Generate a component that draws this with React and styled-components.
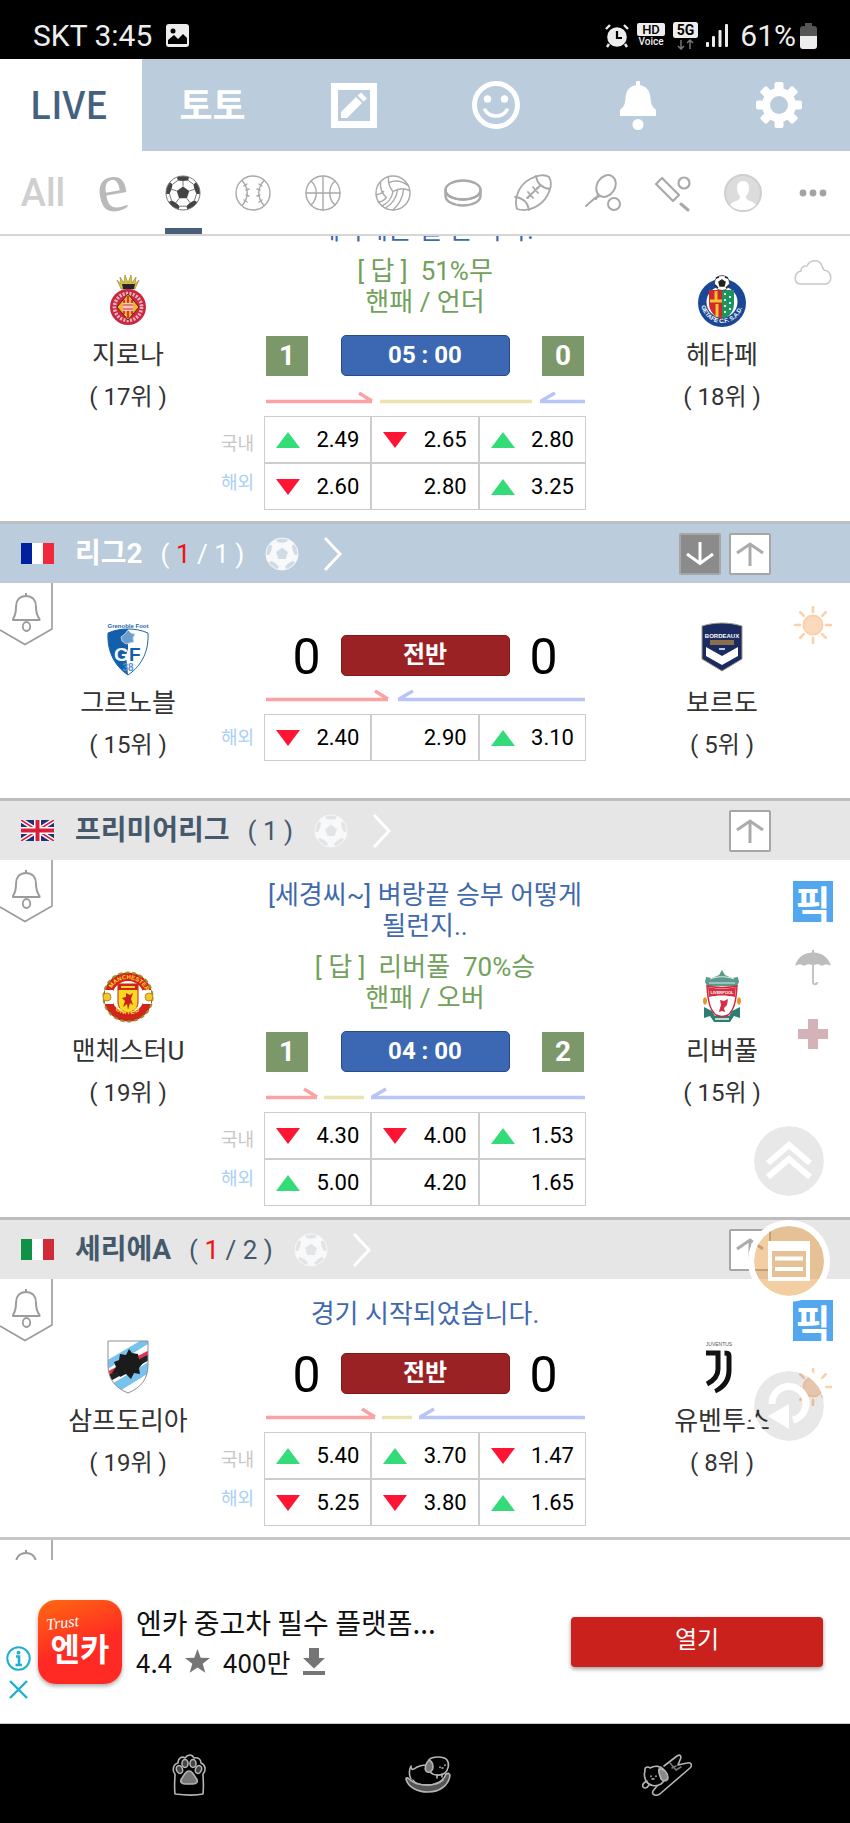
import React, { useState } from "react";
import styled, { createGlobalStyle } from "styled-components";

const GlobalStyle = createGlobalStyle`
  * {
    box-sizing: border-box;
  }

  body {
    margin: 0;
    background: #fff;
    font-family: Roboto, "Noto Sans CJK KR", sans-serif;
    color: #333;
  }

  button {
    padding: 0;
    border: none;
    background: none;
    font: inherit;
    color: inherit;
    cursor: pointer;
  }

  svg {
    display: block;
    flex-shrink: 0;
  }
`;

const Page = styled.div`
  display: flex;
  flex-direction: column;
  height: 100vh;
  overflow: hidden;
`;

/* ---------- status bar ---------- */

const StatusBar = styled.div`
  display: flex;
  align-items: center;
  justify-content: space-between;
  height: 59px;
  padding: 12px 33px 0;
  background: #000;
  color: #ededed;
  font-size: 30px;
  line-height: 36px;
`;

const StatusGroup = styled.div`
  display: flex;
  align-items: center;
  gap: ${(p) => p.$gap}px;
`;

const Battery = styled.div`
  display: flex;
  align-items: center;
  gap: 4px;
  margin-left: 4px;
`;

/* ---------- main tabs ---------- */

const MainTabs = styled.nav`
  display: flex;
  height: 92px;
  flex-shrink: 0;
  background: #bbccdc;
`;

const MainTab = styled.button`
  flex: 1;
  display: flex;
  align-items: center;
  justify-content: center;
  background: ${(p) => (p.$active ? "#fff" : "transparent")};
  color: ${(p) => (p.$active ? "#43627f" : "#fff")};
  font-family: "Noto Sans CJK KR", sans-serif;
  font-size: 36px;
  line-height: 40px;
  font-weight: 700;
`;

const TabWord = styled.span`
  padding-bottom: 4px;
`;

const LiveWord = styled(TabWord)`
  padding-right: 4px;
  font-size: 38px;
  font-weight: 500;
`;

/* ---------- sport tabs ---------- */

const SportTabs = styled.nav`
  display: flex;
  height: 85px;
  flex-shrink: 0;
  padding: 0 2px 0 8px;
  border-bottom: 2px solid #d6d6d6;
`;

const SportTab = styled.button`
  flex: 1;
  display: flex;
  flex-direction: column;
  align-items: center;
  color: #a9a9a9;

  &::after {
    content: "";
    width: 37px;
    height: 6px;
    background: ${(p) => (p.$active ? "#4a6078" : "transparent")};
  }
`;

const SportFace = styled.span`
  flex: 1;
  display: flex;
  align-items: center;
  padding-top: 7px;
`;

const AllLabel = styled.span`
  color: #cfcfcf;
  font-size: 38px;
  font-weight: 500;
  line-height: 40px;
`;

const ELabel = styled.span`
  padding-bottom: 12px;
  color: #b9b9b9;
  font-family: "Liberation Serif", serif;
  font-size: 72px;
  line-height: 40px;
  transform: rotate(-10deg);
`;

/* ---------- list ---------- */

const Board = styled.main`
  position: relative;
  flex: 1;
  min-height: 0;
  overflow: hidden;
`;

const Scrolled = styled.div`
  margin-top: -72px;
`;

const LeagueBar = styled.header`
  display: flex;
  align-items: center;
  height: 62px;
  padding: 0 79px 0 21px;
  border-top: 3px solid #bdbdbd;
  background: ${(p) => (p.$live ? "#bbccdc" : "#e6e6e6")};
  color: ${(p) => (p.$live ? "#fff" : "#44596c")};
`;

const LeagueLink = styled.a`
  flex: 1;
  display: flex;
  align-items: center;
  color: inherit;
  text-decoration: none;
`;

const LeagueName = styled.span`
  margin: 0 18px 0 21px;
  font-size: 28px;
  line-height: 36px;
  font-weight: 700;
`;

const LeagueCount = styled.span`
  margin-right: 21px;
  font-size: 26px;
  line-height: 36px;
`;

const LiveCount = styled.span`
  color: #f01010;
`;

const ChevronBox = styled.span`
  margin-left: 24px;
`;

const MoveButtons = styled.div`
  display: flex;
  gap: 8px;
`;

const MoveButton = styled.button`
  display: flex;
  align-items: center;
  justify-content: center;
  width: 42px;
  height: 42px;
  border: 2px solid #a6a6a6;
  border-radius: 2px;
  background: ${(p) => (p.$dark ? "#8b8b8b" : "#fff")};
  color: ${(p) => (p.$dark ? "#fff" : "#ababab")};
`;

const MatchRow = styled.article`
  position: relative;
  display: grid;
  grid-template-columns: 1fr 338px 1fr;
  min-height: 215px;
`;

const AlarmButton = styled.button`
  position: absolute;
  top: 0;
  left: 0;
`;

const Team = styled.div`
  display: flex;
  flex-direction: column;
  align-items: center;
  justify-content: center;
  padding-top: 4px;
`;

const TeamName = styled.div`
  margin-top: 9px;
  font-size: 26px;
  line-height: 36px;
`;

const TeamRank = styled.div`
  margin-top: 6px;
  font-size: 24px;
  line-height: 36px;
`;

const Center = styled.div`
  padding: 20px 8px 11px;
`;

const Talk = styled.div`
  min-height: 30px;
  padding-bottom: 11px;
  font-size: 26px;
  line-height: 31px;
  text-align: center;
  white-space: pre-line;
`;

const Question = styled.p`
  margin: 0 -8px 10px;
  color: #4069ad;
`;

const Answer = styled.p`
  margin: 0 0 6px;
  color: #71a15b;
  white-space: pre-wrap;
`;

const ScoreBar = styled.div`
  display: grid;
  grid-template-columns: 1fr 169px 1fr;
  align-items: center;
  height: 41px;
  padding: 0 2px;
`;

const Guess = styled.div`
  display: flex;
  align-items: center;
  justify-content: center;
  width: 42px;
  height: 40px;
  justify-self: ${(p) => p.$side};
  background: #7c9769;
  color: #fff;
  font-size: 28px;
  font-weight: 700;
`;

const Goals = styled.div`
  justify-self: ${(p) => p.$side};
  padding: 4px 20px 0;
  color: #000;
  font-size: 50px;
  line-height: 41px;
`;

const Pill = styled.div`
  height: 41px;
  border: 1px solid ${(p) => (p.$live ? "#84191c" : "#2a4a8c")};
  border-radius: 5px;
  background: ${(p) => (p.$live ? "#9a2224" : "#3b67b3")};
  color: #fff;
  font-size: 24px;
  font-weight: 700;
  line-height: 39px;
  text-align: center;
`;

const TrendRow = styled.div`
  margin: 14px 0 12px;
  padding: 0 2px;
`;

const OddsTable = styled.table`
  width: calc(100% + 43px);
  margin-left: -43px;
  table-layout: fixed;
  border-collapse: separate;
  border-spacing: 0;
`;

const SourceCell = styled.th`
  width: 43px;
  padding: 0 10px 0 0;
  color: ${(p) => (p.$foreign ? "#a9cff6" : "#c6c6c6")};
  font-size: 18px;
  font-weight: 400;
  line-height: 20px;
  text-align: left;
  white-space: nowrap;

  tr:first-child:not(:only-child) & {
    padding-top: 8px;
  }

  tr:last-child:not(:only-child) & {
    padding-bottom: 8px;
  }
`;

const OddsCell = styled.td`
  height: 47px;
  padding: 0 11px;
  border: 1px solid #cdcdcd;
  color: #000;
`;

const OddsValue = styled.div`
  display: flex;
  align-items: center;
  justify-content: space-between;
  font-size: 22px;
  line-height: 24px;
`;

const Triangle = styled.span`
  width: 0;
  height: 0;
  border-left: 12px solid transparent;
  border-right: 12px solid transparent;
  border-bottom: ${(p) => (p.$up ? "16px solid #33dc78" : "none")};
  border-top: ${(p) => (p.$up ? "none" : "16px solid #ff1433")};
`;

const Extras = styled.div`
  position: absolute;
  top: 21px;
  right: 16px;
  display: flex;
  flex-direction: column;
  gap: 25px;
`;

const Extra = styled.div`
  display: flex;
  align-items: center;
  justify-content: center;
  width: 42px;
  height: 41px;
`;

const PickButton = styled.button`
  width: 40px;
  height: 41px;
  background: #53a7ee;
  color: #fff;
  font-family: "Noto Sans CJK KR", sans-serif;
  font-size: 38px;
  font-weight: 700;
  line-height: 38px;
`;

const Floating = styled.div`
  position: absolute;
  right: 20px;
  bottom: 113px;
  display: flex;
  flex-direction: column;
  gap: 18px;
`;

const RoundButton = styled.button`
  display: flex;
  align-items: center;
  justify-content: center;
  width: 82px;
  height: 82px;
  border: 6px solid #fff;
  border-radius: 50%;
  background: ${(p) => (p.$warm ? "rgba(232, 150, 60, 0.47)" : "rgba(0, 0, 0, 0.09)")};
  background-clip: padding-box;

  &:last-child {
    margin-top: 45px;
  }
`;

/* ---------- ad ---------- */

const Ad = styled.aside`
  display: flex;
  align-items: center;
  height: 164px;
  flex-shrink: 0;
  padding: 0 27px 0 6px;
  border-bottom: 1px solid #ccc;
  background: #fff;
`;

const AdMarks = styled.div`
  display: flex;
  flex-direction: column;
  align-items: center;
  gap: 9px;
  width: 25px;
  padding-top: 62px;
`;

const AppIcon = styled.div`
  display: flex;
  flex-direction: column;
  align-items: center;
  width: 84px;
  height: 84px;
  margin: 0 14px 0 7px;
  padding-top: 14px;
  border-radius: 18px;
  background: linear-gradient(160deg, #ff6a10, #ff2a24 55%);
  box-shadow: 0 2px 4px rgba(0, 0, 0, 0.35);
  color: #fff;
`;

const AppTagline = styled.span`
  align-self: flex-start;
  margin-left: 8px;
  font-family: "Liberation Serif", serif;
  font-size: 16px;
  font-style: italic;
  line-height: 18px;
  transform: rotate(-7deg);
`;

const AppName = styled.span`
  font-size: 32px;
  font-weight: 700;
  line-height: 36px;
`;

const AdText = styled.div`
  flex: 1;
  color: #111;
  font-family: "Noto Sans CJK KR", sans-serif;
  font-size: 26px;
  line-height: 39px;
`;

const AdTitle = styled.div`
  font-size: 28px;
`;

const AdMeta = styled.div`
  display: flex;
  align-items: center;
  gap: 13px;
`;

const OpenButton = styled.button`
  width: 252px;
  height: 50px;
  border-radius: 4px;
  background: #cb211d;
  box-shadow: 0 2px 4px rgba(0, 0, 0, 0.4);
  color: #fff;
  font-size: 24px;
  line-height: 30px;
  padding-bottom: 3px;
`;

/* ---------- phone nav ---------- */

const PhoneNav = styled.div`
  display: flex;
  height: 99px;
  flex-shrink: 0;
  padding: 2px 64px 0 70px;
  background: #000;
`;

const PhoneKey = styled.button`
  flex: 1;
  display: flex;
  align-items: center;
  justify-content: center;
`;

/* ---------- icons ---------- */

const polar = (r, deg) => {
  const a = (deg * Math.PI) / 180;
  return `${(18 + r * Math.cos(a)).toFixed(2)} ${(18 + r * Math.sin(a)).toFixed(2)}`;
};

const SoccerBall = ({ size = 36, line = "#777", fill = "#fff", patch = "#444" }) => {
  const dirs = [-90, -18, 54, 126, 198];
  return (
    <svg width={size} height={size} viewBox="0 0 36 36">
      <circle cx="18" cy="18" r="17" fill={fill} />
      <path d={`M${dirs.map((d) => polar(6.6, d)).join("L")}Z`} fill={patch} />
      {dirs.map((d) => (
        <g key={d}>
          <path
            d={`M${polar(12, d)}L${polar(13.6, d + 22)}L${polar(17, d + 21)}A17 17 0 0 0 ${polar(17, d - 21)}L${polar(13.6, d - 22)}Z`}
            fill={patch}
          />
          <path
            d={`M${polar(6.6, d)}L${polar(12, d)}M${polar(13.6, d + 22)}L${polar(13.6, d + 50)}`}
            stroke={line}
            strokeWidth="1"
          />
        </g>
      ))}
      <circle cx="18" cy="18" r="17" fill="none" stroke={line} strokeWidth="1" />
    </svg>
  );
};

const Line = ({ width = 36, height = 36, box, stroke = 1.4, children }) => (
  <svg
    width={width}
    height={height}
    viewBox={box || `0 0 ${width} ${height}`}
    fill="none"
    stroke="currentColor"
    strokeWidth={stroke}
    strokeLinecap="round"
    strokeLinejoin="round"
  >
    {children}
  </svg>
);

const Baseball = () => (
  <Line>
    <circle cx="18" cy="18" r="17" />
    <path d="M7 5.5c7 7.500 7 17.500 0 25M29 5.500c-7 7.500-7 17.500 0 25" />
    <path d="M9 11l3-2M11 15l3-1M11 20l3 1M9 25l3 2M27 11l-3-2M25 15l-3-1M25 20l-3 1M27 25l-3 2" />
  </Line>
);

const Basketball = () => (
  <Line>
    <circle cx="18" cy="18" r="17" />
    <path d="M18 1v34M1 18h34M6 6c7 6 7 18 0 24M30 6c-7 6-7 18 0 24" />
  </Line>
);

const Volleyball = () => (
  <Line>
    <circle cx="18" cy="18" r="17" />
    <path d="M13.500 1.800c-.5 6 1 11 4.500 14.700 5-3 11-3.500 16.500-1M18 16.500C17 23 13 28 7 31" />
    <path d="M5.500 6.500c-.5 7 1 12 6 16M14 7.500c6-2.500 13-1.500 19 3M11.500 22.500C9 25.500 6 27 3 27" />
    <path d="M22.500 15c-1 8-5.500 14-12 18M28.500 14.500c-.5 8-4.500 15-10.500 20.500M1.200 20c3-.5 5.500-1.500 7.500-3.500" />
  </Line>
);

const Puck = () => (
  <Line width={38} height={28} stroke={2.4}>
    <ellipse cx="19" cy="11" rx="17.500" ry="9.500" />
    <path d="M1.500 11v6c0 5.500 8 9.500 17.500 9.500s17.500-4 17.500-9.500v-6" />
    <path d="M2 14c2 4 9 6.500 17 6.500S34 18 36 14" />
  </Line>
);

const Football = () => (
  <Line width={38} height={38} stroke={1.8}>
    <path d="M3 35C-1 22 7 10 16 5 23 1 31 0 35 3c3 5 2 12-2 19C28 31 15 39 3 35z" />
    <path d="M22 2c1 7 6 12 14 13M1 23c8 1 13 6 14 13" />
    <path d="M13 24l12-11M14 18l5 6M19 13l5 6M16 21l-2 3M23 14l3-2" />
  </Line>
);

const Racket = () => (
  <Line width={38} height={38} stroke={2}>
    <ellipse cx="22" cy="12" rx="9" ry="11.500" transform="rotate(32 22 12)" />
    <path d="M14 20c-1 3-1 4-2 5M17 22c-2 0-4 1-6 2L2 32" />
    <circle cx="30" cy="30" r="6" />
  </Line>
);

const Cricket = () => (
  <Line width={38} height={38} stroke={2.2}>
    <path d="M2 10l6-6 17 17-6 6z" />
    <path d="M27 30l7 6" strokeWidth="3" />
    <circle cx="30" cy="9" r="5.500" />
  </Line>
);

const Person = () => (
  <svg width="38" height="38" viewBox="0 0 38 38">
    <circle cx="19" cy="19" r="18" fill="#dcdcdc" stroke="#cfcfcf" strokeWidth="2" />
    <path
      d="M19 7c4 0 6 3 6 7s-1 6-3 8c0 3 1 4 4 5 3 1 5 2 6 4-4 4-8 5-13 5s-9-1-13-5c1-2 3-3 6-4s4-2 4-5c-2-2-3-4-3-8s2-7 6-7z"
      fill="#fff"
    />
  </svg>
);

const Dots = () => (
  <svg width="28" height="8" viewBox="0 0 28 8" fill="#a3a3a3">
    <circle cx="4" cy="4" r="3.400" />
    <circle cx="14" cy="4" r="3.400" />
    <circle cx="24" cy="4" r="3.400" />
  </svg>
);

const EditIcon = () => (
  <svg width="46" height="45" viewBox="0 0 46 45">
    <path d="M0 0h46v45H0zM7 7v31h32V7z" fill="#fff" fillRule="evenodd" />
    <path d="M10 29L25 14l6 6-15 15h-6zM26.500 12.500L30 9.500l6 6-3.500 3z" fill="#fff" />
  </svg>
);

const SmileIcon = () => (
  <svg width="48" height="48" viewBox="0 0 48 48" fill="none" stroke="#fff">
    <circle cx="24" cy="24" r="21.500" strokeWidth="5" />
    <circle cx="15.500" cy="18" r="3.700" fill="#fff" stroke="none" />
    <circle cx="32.500" cy="18" r="3.700" fill="#fff" stroke="none" />
    <path d="M13 29c5 8 17 8 22 0" strokeWidth="3.500" strokeLinecap="round" />
  </svg>
);

const SolidBell = () => (
  <svg width="36" height="49" viewBox="0 0 36 49" fill="#fff">
    <path d="M16 1.500a2 2 0 0 1 4 0V4c7 1.500 10 6 10.500 13 .5 6 1 8 5.500 12v6H0v-6c4.500-4 5-6 5.500-12C6 10 9 5.500 16 4z" />
    <circle cx="18" cy="43.500" r="5.500" />
  </svg>
);

const Gear = () => (
  <svg width="48" height="48" viewBox="0 0 48 48">
    {[0, 45, 90, 135].map((r) => (
      <rect key={r} x="19.500" y="1" width="9" height="46" rx="2" fill="#fff" transform={`rotate(${r} 24 24)`} />
    ))}
    <circle cx="24" cy="24" r="17" fill="#fff" />
    <circle cx="24" cy="24" r="9" fill="#bbccdc" />
  </svg>
);

const PhotoIcon = () => (
  <svg width="23" height="23" viewBox="0 0 23 23">
    <rect width="23" height="23" rx="3" fill="#ededed" />
    <circle cx="7" cy="7" r="2.500" fill="#000" />
    <path d="M2 20v-4l6-5 4 4 5-5 4 4v6z" fill="#000" />
  </svg>
);

const AlarmIcon = () => (
  <svg width="24" height="24" viewBox="0 0 24 24">
    <circle cx="12" cy="13" r="9.800" fill="#ededed" />
    <path d="M1 5l4-4M23 5l-4-4M4 20l-2 3M20 20l2 3" stroke="#ededed" strokeWidth="2.400" />
    <path d="M12 7v7h5" fill="none" stroke="#000" strokeWidth="2.200" />
  </svg>
);

const VoiceIcon = () => (
  <svg width="28" height="26" viewBox="0 0 28 26">
    <rect width="28" height="13" rx="2" fill="#ededed" />
    <text x="14" y="11" textAnchor="middle" fontFamily="Roboto" fontSize="13" fontWeight="500" fill="#000">HD</text>
    <text x="14" y="22" textAnchor="middle" fontFamily="Roboto" fontSize="10" fontWeight="500" fill="#ededed">Voice</text>
  </svg>
);

const NetworkIcon = () => (
  <svg width="25" height="28" viewBox="0 0 25 28">
    <rect width="25" height="16" rx="2.500" fill="#ededed" />
    <text x="12.500" y="13" textAnchor="middle" fontFamily="Roboto" fontSize="14" fontWeight="700" fill="#000">5G</text>
    <path d="M8 18v9M5 24l3 3 3-3M17 27v-9M14 21l3-3 3 3" fill="none" stroke="#777" strokeWidth="1.500" />
  </svg>
);

const SignalIcon = () => (
  <svg width="22" height="23" viewBox="0 0 22 23" fill="#ededed">
    <rect x="0" y="18" width="3" height="5" rx="1" />
    <rect x="6" y="12" width="3" height="11" rx="1" />
    <rect x="12.500" y="6" width="3" height="17" rx="1" />
    <rect x="19" y="0" width="3" height="23" rx="1" />
  </svg>
);

const BatteryIcon = () => (
  <svg width="17" height="26" viewBox="0 0 17 26">
    <path d="M5 0h7v3h2a3 3 0 0 1 3 3v8H0V6a3 3 0 0 1 3-3h2z" fill="#555" />
    <path d="M0 13h17v10a3 3 0 0 1-3 3H3a3 3 0 0 1-3-3z" fill="#ededed" />
  </svg>
);

const AlarmTag = () => (
  <svg width="54" height="64" viewBox="0 0 54 64" fill="none" stroke="#9b9b9b" strokeWidth="1.600">
    <path d="M52 0v46L25 61.500 0 47" />
    <path
      d="M26 10v3M26 13c-7 0-10 5-10 11 0 7-1 9-3 12v1h26.500v-1c-2-3-3.500-5-3.500-12 0-6-3-11-10-11z"
      strokeWidth="2"
      strokeLinejoin="round"
    />
    <ellipse cx="26.500" cy="43.500" rx="3.700" ry="4.500" strokeWidth="1.800" />
  </svg>
);

const Chevron = () => (
  <svg width="20" height="34" viewBox="0 0 20 34" fill="none" stroke="#fff" strokeWidth="3">
    <path d="M2 1l15 16L2 33" />
  </svg>
);

const MoveArrow = ({ down }) => (
  <svg width="28" height="24" viewBox="0 0 28 24" fill="none" stroke="currentColor" strokeWidth="3">
    <path d={down ? "M14 0v22M1 12l13 9.500 13-9.500" : "M14 24V2M1 11l13-9 13 9"} />
  </svg>
);

const Cloud = () => (
  <Line width={38} height={26} stroke={1.6}>
    <path
      d="M6 25c-6-1-7-11 1-13 0-4 3-5 6-5 3-7 13-7 15 0 1 2 1 3 2 4 8 1 9 12 2 14z"
      stroke="#c9c9c9"
    />
  </Line>
);

const Sun = () => (
  <svg width="38" height="38" viewBox="0 0 38 38">
    <circle cx="19" cy="19" r="9.500" fill="#fcd9bd" stroke="#fbd0ab" strokeWidth="2" />
    {[0, 45, 90, 135, 180, 225, 270, 315].map((r) => (
      <path key={r} d="M19 1v5" stroke="#fbd0ab" strokeWidth="2.600" strokeLinecap="round" transform={`rotate(${r} 19 19)`} />
    ))}
  </svg>
);

const Umbrella = () => (
  <svg width="38" height="36" viewBox="0 0 38 36">
    <path
      d="M1 16C4 6 11 3 18 2.500V0h2v2.500C27 3 34 6 37 16c-3-2-7-2-9 0-3-2-5-2-8-1h-2c-3-1-5-1-8 1-2-2-6-2-9 0z"
      fill="#bdbdbd"
    />
    <path d="M19 14v18c0 3 4 3 4 0" fill="none" stroke="#c4c4c4" strokeWidth="2" />
  </svg>
);

const Cross = () => (
  <svg width="30" height="30" viewBox="0 0 30 30">
    <path d="M10 0h10v10h10v10H20v10H10V20H0V10h10z" fill="#d3b3b7" />
  </svg>
);

const Flag = ({ code }) => (
  <svg width="33" height="21" viewBox="0 0 33 21">
    {code === "gb" ? (
      <>
        <rect width="33" height="21" fill="#1f2f7c" />
        <path d="M0 0l33 21M33 0L0 21" stroke="#fff" strokeWidth="4.500" />
        <path d="M0 0l33 21M33 0L0 21" stroke="#d8203a" strokeWidth="1.600" />
        <path d="M16.500 0v21M0 10.500h33" stroke="#fff" strokeWidth="7" />
        <path d="M16.500 0v21M0 10.500h33" stroke="#d8203a" strokeWidth="4" />
      </>
    ) : (
      <>
        <rect width="11" height="21" fill={code === "fr" ? "#00209f" : "#109148"} />
        <rect x="11" width="11" height="21" fill="#fff" />
        <rect x="22" width="11" height="21" fill={code === "fr" ? "#f1283c" : "#d02b37"} />
      </>
    )}
  </svg>
);

/* ---------- crests ---------- */

const Girona = () => (
  <svg width="54" height="54" viewBox="0 0 54 54">
    <path d="M16 6l4 4-1-7 4 6 1-8 3 8 3-8 1 8 4-6-1 7 4-4-4 9H20z" fill="#d8c243" stroke="#8d8130" strokeWidth=".6" />
    <path d="M21 10h13l-1 5H22z" fill="#26242a" />
    <circle cx="27" cy="33" r="18" fill="#c8283f" />
    <circle cx="27" cy="33" r="13.500" fill="none" stroke="#eab4bc" strokeWidth="3.600" strokeDasharray="2 1.400" />
    <circle cx="27" cy="33" r="11" fill="#cc2940" />
    <path d="M27 20l11 13-11 13-11-13z" fill="#f3b32c" stroke="#5b2220" />
    <path d="M23 26v14M27 22v22M31 26v14" stroke="#d42b39" strokeWidth="1.800" />
    <path d="M22 29h10v8H22z" fill="#f5c7c0" />
    <path d="M22 31h10M22 35h10" stroke="#d42b39" />
  </svg>
);

const Getafe = () => (
  <svg width="54" height="54" viewBox="0 0 54 54">
    <circle cx="27" cy="29" r="24" fill="#1c4796" />
    <circle cx="27" cy="28" r="15.500" fill="#fff" />
    <path d="M14 16h13v29c-8-2-13-8-13-16z" fill="#cf2a2a" />
    <path d="M27 16h12v13c0 8-4 14-12 16z" fill="#1e9360" />
    <path d="M15 27h12M21 17v9M22 30v13" stroke="#f2c230" strokeWidth="3" />
    <path d="M30 19v20M35 22v14" stroke="#d6efe2" strokeWidth="2" strokeDasharray="2 4" />
    <path id="getafe-ring" d="M6 28a21 21 0 0 0 42 0" fill="none" />
    <text fontFamily="Liberation Sans" fontSize="6" fontWeight="700" fill="#fff">
      <textPath href="#getafe-ring" startOffset="4">GETAFE C.F. S.A.D.</textPath>
    </text>
    <circle cx="27" cy="9" r="7.500" fill="#fff" stroke="#333" strokeWidth=".8" />
    <path d="M27 6l3 2-1 4h-4l-1-4zM21 4l3-1M33 4l-3-1M20 11l3 3M34 11l-3 3" fill="#222" stroke="#222" strokeWidth="1.500" />
  </svg>
);

const Grenoble = () => (
  <svg width="54" height="54" viewBox="0 0 54 54">
    <text x="27" y="6" textAnchor="middle" fontFamily="Liberation Sans" fontSize="6" fontWeight="700" fill="#2768aa">Grenoble Foot</text>
    <path d="M7 11c7-3 13-4 20-4s13 1 20 4c1 16-5 32-20 42C12 43 6 27 7 11z" fill="#fff" stroke="#1e66ad" strokeWidth="1" />
    <path d="M7 11c7-3 13-4 20-4v20l-2 6 2 20C12 43 6 27 7 11z" fill="#135fab" />
    <path d="M27 8l3 3 4 1-2 4 1 4-4 1-4 1-4-3-1-4 4-3z" fill="#6b9dcd" stroke="#d7e6f4" strokeWidth=".8" />
    <text x="13" y="39" fontFamily="Liberation Sans" fontSize="19" fontWeight="700" fill="#fff">G</text>
    <text x="28" y="39" fontFamily="Liberation Sans" fontSize="19" fontWeight="700" fill="#135fab">F</text>
    <text x="27" y="49" textAnchor="middle" fontFamily="Liberation Sans" fontSize="10" fontWeight="700" fill="#5b92c7">38</text>
  </svg>
);

const Bordeaux = () => (
  <svg width="54" height="54" viewBox="0 0 54 54">
    <path d="M7 4c13-4 27-4 40 0v33L27 49 7 37z" fill="#1b2a5f" stroke="#a39c86" strokeWidth="1" />
    <text x="27" y="16" textAnchor="middle" fontFamily="Liberation Sans" fontSize="6" fontWeight="700" fill="#fff">BORDEAUX</text>
    <path d="M15 18h24v5H15z" fill="#8b6e4a" />
    <path d="M24 27h6" stroke="#c0c6da" strokeWidth="2" />
    <path d="M11 25l16 9 16-9v9L27 43l-16-9z" fill="#fff" />
  </svg>
);

const ManUnited = () => (
  <svg width="54" height="54" viewBox="0 0 54 54">
    <circle cx="27" cy="27" r="24.500" fill="#d3241c" stroke="#8f9a2c" strokeDasharray="4 3" strokeWidth="2" />
    <circle cx="27" cy="27" r="16" fill="#fff" />
    <path d="M4 20h8v14H4zM42 20h8v14h-8z" fill="#fff" />
    <path d="M17 14h20v18c0 6-4 9-10 11-6-2-10-5-10-11z" fill="#f8d820" stroke="#b32a1c" />
    <path d="M17 14h20v6H17z" fill="#d3241c" />
    <path d="M20 17h14" stroke="#f8d820" strokeWidth="2" />
    <path d="M25 23l4 2 3-2-2 6 2 6-3-2-2 7-1-6-4 3 2-6-3-3 4-1z" fill="#c9211c" />
    <circle cx="6" cy="27" r="4" fill="#f2c92a" stroke="#a8781c" strokeWidth=".8" />
    <circle cx="48" cy="27" r="4" fill="#f2c92a" stroke="#a8781c" strokeWidth=".8" />
    <path id="mu-top" d="M9 22a19 19 0 0 1 36 0" fill="none" />
    <path id="mu-bottom" d="M12 38a21 21 0 0 0 30 0" fill="none" />
    <text fontFamily="Liberation Sans" fontSize="6" fontWeight="700" fill="#f9d926">
      <textPath href="#mu-top" startOffset="4">MANCHESTER</textPath>
    </text>
    <text fontFamily="Liberation Sans" fontSize="7" fontWeight="700" fill="#f9d926">
      <textPath href="#mu-bottom" startOffset="3">UNITED</textPath>
    </text>
  </svg>
);

const Liverpool = () => (
  <svg width="54" height="54" viewBox="0 0 54 54">
    <path d="M27 0l3 5 7 3 6-1 1 5-2 4H12l-2-4 1-5 6 1 7-3z" fill="#5c9a8d" />
    <path d="M15 9c8-3 16-3 24 0M14 13h26" stroke="#dcebe6" strokeWidth="1" fill="none" />
    <path d="M9 37l8 4 3 5h14l3-5 8-4v11l-6-2-4 6H19l-4-6-6 2z" fill="#2a7f72" />
    <path d="M12 16c10 2 20 2 30 0-1 16-3 24-9 29-4 2-8 2-12 0-6-5-8-13-9-29z" fill="#fff" stroke="#cf2a3c" strokeWidth="1.500" />
    <path d="M13 17c9 2 19 2 28 0l-1 10c-8-2-18-2-26 0z" fill="#d62e42" />
    <text x="27" y="24" textAnchor="middle" fontFamily="Liberation Sans" fontSize="4" fontWeight="700" fill="#fff">LIVERPOOL</text>
    <path d="M25 30l4 1 4-2-1 6-3 3 1 4-3-1-3 1 1-4 1-3z" fill="#d62e42" />
    <path d="M8 31c0-5 4-5 4 0s-4 5-4 0zM42 31c0-5 4-5 4 0s-4 5-4 0z" fill="#e8952f" />
    <path d="M20 49h14" stroke="#bddbd4" strokeWidth="2" />
  </svg>
);

const Sampdoria = () => (
  <svg width="54" height="54" viewBox="0 0 54 54">
    <clipPath id="samp-shield">
      <path d="M7 1h40v24c0 15-8 23-20 28C15 48 7 40 7 25z" />
    </clipPath>
    <g clipPath="url(#samp-shield)">
      <rect width="54" height="54" fill="#fff" />
      <path d="M0 24L44-2l8 3L0 33zM4 48l50-30v11L14 54z" fill="#78c3ee" />
      <path d="M0 35l54-28v7L0 42z" fill="#e4344b" />
      <path d="M0 39l54-28v6L0 46z" fill="#222" />
    </g>
    <path d="M28 9l3 4 6 1 1 6 4 3-4 5 1 6-6-1-3 6-5-5-6 3-2-5-6 1 4-6-2-5 5-2 1-6 6 1z" fill="#1b1b1b" />
    <path d="M7 1h40v24c0 15-8 23-20 28C15 48 7 40 7 25z" fill="none" stroke="#8f8f8f" />
  </svg>
);

const Juventus = () => (
  <svg width="54" height="54" viewBox="0 0 54 54">
    <text x="24" y="6" textAnchor="middle" fontFamily="Liberation Sans" fontSize="5" fill="#555">JUVENTUS</text>
    <path d="M11 13h12v16c0 8-5 12-11 15" fill="none" stroke="#111" strokeWidth="5" />
    <path d="M28 13c4 0 6 0 6 3v14c0 11-5 17-14 21" fill="none" stroke="#111" strokeWidth="5" />
    <path d="M28.500 10v22c0 8-4 14-12 18" fill="none" stroke="#fff" strokeWidth="2" />
  </svg>
);

/* ---------- data ---------- */

const leagues = [
  {
    id: "laliga",
    matches: [
      {
        id: "gir-get",
        home: { name: "지로나", rank: 17, Crest: Girona, guess: 1 },
        away: { name: "헤타페", rank: 18, Crest: Getafe, guess: 0 },
        time: "05 : 00",
        question: "\n헤타페는 질 만 하다.",
        answer: "[ 답 ]  51%무\n핸패 / 언더",
        trend: [106, [114, 266], 274],
        odds: [
          ["국내", ["up", "2.49"], ["down", "2.65"], ["up", "2.80"]],
          ["해외", ["down", "2.60"], [null, "2.80"], ["up", "3.25"]],
        ],
        extras: ["none", "cloud"],
      },
    ],
  },
  {
    id: "ligue2",
    name: "리그2",
    flag: "fr",
    live: 1,
    total: 1,
    highlighted: true,
    matches: [
      {
        id: "gre-bor",
        home: { name: "그르노블", rank: 15, Crest: Grenoble, goals: 0 },
        away: { name: "보르도", rank: 5, Crest: Bordeaux, goals: 0 },
        period: "전반",
        trend: [122, null, 132],
        odds: [["해외", ["down", "2.40"], [null, "2.90"], ["up", "3.10"]]],
        extras: ["sun"],
      },
    ],
  },
  {
    id: "epl",
    name: "프리미어리그",
    flag: "gb",
    total: 1,
    matches: [
      {
        id: "mun-liv",
        home: { name: "맨체스터U", rank: 19, Crest: ManUnited, guess: 1 },
        away: { name: "리버풀", rank: 15, Crest: Liverpool, guess: 2 },
        time: "04 : 00",
        question: "[세경씨~] 벼랑끝 승부 어떻게\n될런지..",
        answer: "[ 답 ]  리버풀  70%승\n핸패 / 오버",
        trend: [51, [58, 98], 105],
        odds: [
          ["국내", ["down", "4.30"], ["down", "4.00"], ["up", "1.53"]],
          ["해외", ["up", "5.00"], [null, "4.20"], [null, "1.65"]],
        ],
        extras: ["pick", "umbrella", "cross"],
      },
    ],
  },
  {
    id: "seriea",
    name: "세리에A",
    flag: "it",
    live: 1,
    total: 2,
    matches: [
      {
        id: "sam-juv",
        home: { name: "삼프도리아", rank: 19, Crest: Sampdoria, goals: 0 },
        away: { name: "유벤투스", rank: 8, Crest: Juventus, goals: 0 },
        period: "전반",
        question: "경기 시작되었습니다.",
        trend: [109, [116, 146], 153],
        odds: [
          ["국내", ["up", "5.40"], ["up", "3.70"], ["down", "1.47"]],
          ["해외", ["down", "5.25"], ["down", "3.80"], ["up", "1.65"]],
        ],
        extras: ["pick", "sun"],
      },
    ],
  },
];

const mainTabs = [
  { id: "live", label: "LIVE", face: <LiveWord>LIVE</LiveWord> },
  { id: "toto", label: "토토", face: <TabWord>토토</TabWord> },
  { id: "write", label: "글쓰기", face: <EditIcon /> },
  { id: "fun", label: "커뮤니티", face: <SmileIcon /> },
  { id: "alarm", label: "알림", face: <SolidBell /> },
  { id: "settings", label: "설정", face: <Gear /> },
];

const sportTabs = [
  { id: "all", label: "전체", face: <AllLabel>All</AllLabel> },
  { id: "esports", label: "e스포츠", face: <ELabel>e</ELabel> },
  { id: "soccer", label: "축구", face: <SoccerBall /> },
  { id: "baseball", label: "야구", face: <Baseball /> },
  { id: "basketball", label: "농구", face: <Basketball /> },
  { id: "volleyball", label: "배구", face: <Volleyball /> },
  { id: "hockey", label: "하키", face: <Puck /> },
  { id: "football", label: "미식축구", face: <Football /> },
  { id: "tennis", label: "테니스", face: <Racket /> },
  { id: "cricket", label: "크리켓", face: <Cricket /> },
  { id: "user", label: "내 경기", face: <Person /> },
  { id: "more", label: "더보기", face: <Dots /> },
];

const extraFaces = {
  none: null,
  pick: <PickButton>픽</PickButton>,
  cloud: <Cloud />,
  sun: <Sun />,
  umbrella: <Umbrella />,
  cross: <Cross />,
};

/* ---------- parts ---------- */

const Trend = ({ trend: [home, draw, away] }) => (
  <TrendRow>
    <svg width="319" height="14" viewBox="0 0 319 14" fill="none" strokeWidth="3.400">
      <path d={`M0 11.500H${home}M${home - 13} 3l13 8`} stroke="#fba3a3" />
      {draw && <path d={`M${draw[0]} 11.500h${draw[1] - draw[0]}`} stroke="#ebe3ae" />}
      <path d={`M319 11.500H${away}M${away + 15} 3l-14 8`} stroke="#b8c4f6" />
    </svg>
  </TrendRow>
);

const TeamSide = ({ team: { name, rank, Crest } }) => (
  <Team>
    <Crest />
    <TeamName>{name}</TeamName>
    <TeamRank>( {rank}위 )</TeamRank>
  </Team>
);

const Score = ({ team, home }) =>
  team.goals === undefined ? (
    <Guess $side={home ? "start" : "end"}>{team.guess}</Guess>
  ) : (
    <Goals $side={home ? "end" : "start"}>{team.goals}</Goals>
  );

const Match = ({ match }) => (
  <MatchRow>
    <TeamSide team={match.home} />
    <Center>
      <Talk>
        {match.question && <Question>{match.question}</Question>}
        {match.answer && <Answer>{match.answer}</Answer>}
      </Talk>
      <ScoreBar>
        <Score team={match.home} home />
        <Pill $live={!!match.period}>{match.period || match.time}</Pill>
        <Score team={match.away} />
      </ScoreBar>
      <Trend trend={match.trend} />
      <OddsTable>
        <tbody>
          {match.odds.map(([source, ...cells]) => (
            <tr key={source}>
              <SourceCell scope="row" $foreign={source === "해외"}>
                {source}
              </SourceCell>
              {cells.map(([move, value], i) => (
                <OddsCell key={i}>
                  <OddsValue>
                    {move ? <Triangle $up={move === "up"} /> : <span />}
                    {value}
                  </OddsValue>
                </OddsCell>
              ))}
            </tr>
          ))}
        </tbody>
      </OddsTable>
    </Center>
    <TeamSide team={match.away} />
    <AlarmButton aria-label="알림 설정">
      <AlarmTag />
    </AlarmButton>
    <Extras>
      {match.extras.map((name) => (
        <Extra key={name}>{extraFaces[name]}</Extra>
      ))}
    </Extras>
  </MatchRow>
);

const LeagueHeader = ({ league }) => (
  <LeagueBar $live={league.highlighted}>
    <LeagueLink href={`#${league.id}`}>
      <Flag code={league.flag} />
      <LeagueName>{league.name}</LeagueName>
      <LeagueCount>
        ( {league.live && <><LiveCount>{league.live}</LiveCount> / </>}
        {league.total} )
      </LeagueCount>
      <SoccerBall
        size={34}
        line="#f6f8fa"
        fill="#f8f9fa"
        patch={league.highlighted ? "#cfdbe6" : "#e4e4e4"}
      />
      <ChevronBox>
        <Chevron />
      </ChevronBox>
    </LeagueLink>
    <MoveButtons>
      {league.highlighted && (
        <MoveButton $dark aria-label="아래로">
          <MoveArrow down />
        </MoveButton>
      )}
      <MoveButton aria-label="위로">
        <MoveArrow />
      </MoveButton>
    </MoveButtons>
  </LeagueBar>
);

const NextMatch = styled.div`
  position: relative;
  min-height: 215px;
  border-top: 3px solid #c6c6c6;
`;

export default function App() {
  const [tab, setTab] = useState("live");
  const [sport, setSport] = useState("soccer");

  return (
    <Page>
      <GlobalStyle />
      <StatusBar>
        <StatusGroup $gap={14}>
          <span>SKT 3:45</span>
          <PhotoIcon />
        </StatusGroup>
        <StatusGroup $gap={8}>
          <AlarmIcon />
          <VoiceIcon />
          <NetworkIcon />
          <SignalIcon />
          <Battery>
            <span>61%</span>
            <BatteryIcon />
          </Battery>
        </StatusGroup>
      </StatusBar>

      <MainTabs>
        {mainTabs.map((t) => (
          <MainTab key={t.id} aria-label={t.label} $active={t.id === tab} onClick={() => setTab(t.id)}>
            {t.face}
          </MainTab>
        ))}
      </MainTabs>

      <SportTabs>
        {sportTabs.map((s) => (
          <SportTab key={s.id} aria-label={s.label} $active={s.id === sport} onClick={() => setSport(s.id)}>
            <SportFace>{s.face}</SportFace>
          </SportTab>
        ))}
      </SportTabs>

      <Board>
        <Scrolled>
          {leagues.map((league) => (
            <section key={league.id}>
              {league.name && <LeagueHeader league={league} />}
              {league.matches.map((m) => (
                <Match key={m.id} match={m} />
              ))}
            </section>
          ))}
          <NextMatch>
            <AlarmButton aria-label="알림 설정">
              <AlarmTag />
            </AlarmButton>
          </NextMatch>
        </Scrolled>
        <Floating>
          <RoundButton aria-label="맨 위로">
            <svg width="46" height="40" viewBox="0 0 46 40" fill="none" stroke="#fff" strokeWidth="6">
              <path d="M2 22L23 4l21 18M2 36l21-18 21 18" />
            </svg>
          </RoundButton>
          <RoundButton $warm aria-label="목록">
            <svg width="42" height="40" viewBox="0 0 42 40">
              <path d="M0 0h42v40H0zM4 10v26h34V10z" fill="#fff" fillRule="evenodd" />
              <path d="M7 17.500h28M7 28h28" stroke="#fff" strokeWidth="4" />
            </svg>
          </RoundButton>
          <RoundButton aria-label="새로고침">
            <svg width="46" height="48" viewBox="0 0 46 48" fill="none">
              <path d="M6 22A17 17 0 1 1 27 38" stroke="#fff" strokeWidth="7" />
              <path d="M2 34l21-12v25z" fill="#fff" />
            </svg>
          </RoundButton>
        </Floating>
      </Board>

      <Ad>
        <AdMarks>
          <svg width="25" height="25" viewBox="0 0 25 25" fill="none" stroke="#1fafd0">
            <circle cx="12.500" cy="12.500" r="11.200" strokeWidth="2" />
            <path d="M10 10.500h3V19M9.500 19h6.500" strokeWidth="2.600" />
            <circle cx="12.500" cy="6.700" r="1.900" fill="#1fafd0" stroke="none" />
          </svg>
          <svg width="19" height="19" viewBox="0 0 19 19" stroke="#1fafd0" strokeWidth="2.400">
            <path d="M1 1l17 17M18 1L1 18" />
          </svg>
        </AdMarks>
        <AppIcon>
          <AppTagline>Trust</AppTagline>
          <AppName>엔카</AppName>
        </AppIcon>
        <AdText>
          <AdTitle>엔카 중고차 필수 플랫폼...</AdTitle>
          <AdMeta>
            <span>4.4</span>
            <svg width="25" height="24" viewBox="0 0 25 24" fill="#757575">
              <path d="M12.500 0l3.200 8.700 9.300.3-7.300 5.700 2.600 9L12.500 18.400l-7.800 5.300 2.600-9L0 9l9.300-.3z" />
            </svg>
            <span>400만</span>
            <svg width="22" height="27" viewBox="0 0 22 27" fill="#757575">
              <path d="M6 0h10v10h6L11 20.500 0 10h6zM0 23h22v4H0z" />
            </svg>
          </AdMeta>
        </AdText>
        <OpenButton>열기</OpenButton>
      </Ad>

      <PhoneNav>
        <PhoneKey aria-label="최근 앱">
          <Line width={34} height={42} stroke={1.6}>
            <g stroke="#b5b5b5">
              <path d="M3 40c-1-10 0-14 0-20-3-3-2-10 3-11 0-5 4-7 7-5 3-4 7-4 9 0 5-1 7 2 7 5 5 2 5 8 2 11 0 6 1 10 0 20-9 2-20 1-28 0z" />
              <ellipse cx="7.500" cy="15.500" rx="3" ry="4" transform="rotate(-25 7.500 15.500)" fill="#444" />
              <ellipse cx="13" cy="9.500" rx="3" ry="4" fill="#444" />
              <ellipse cx="21" cy="9.500" rx="3" ry="4" fill="#444" />
              <ellipse cx="26.500" cy="15.500" rx="3" ry="4" transform="rotate(25 26.500 15.500)" fill="#444" />
              <path d="M17 17c4 0 5 5 7 7 3 4 0 6-3 6h-8c-3 0-6-2-3-6 2-2 3-7 7-7z" fill="#777" />
            </g>
          </Line>
        </PhoneKey>
        <PhoneKey aria-label="홈">
          <Line width={46} height={38} stroke={1.6}>
            <g stroke="#b5b5b5">
              <path d="M1 23c2 8 11 13 22 13 12 0 21-7 22-17-1-2-2-2-4-1-2 7-10 11-19 11-8 0-14-2-18-6-2-2-3-1-3 0z" fill="#555" />
              <path d="M6 23c-2-4-2-9 0-13 0 3 1 4 3 3 5-4 9-4 13-4M8 24c2 4 8 5 14 5 7 0 13-2 16-5" />
              <path d="M24 4c3-4 15-4 18 0 3 4 1 10-2 13-4 3-11 3-15-1" />
              <path d="M24 4c-3 3-5 8-3 11 3 3 7 0 7-4 0-3-2-6-4-7z" fill="#777" />
              <path d="M32 19v3M37 18v3M35 11v.5M40 9v.5M37 12h1" />
            </g>
          </Line>
        </PhoneKey>
        <PhoneKey aria-label="뒤로">
          <Line width={50} height={42} stroke={1.6}>
            <g stroke="#b5b5b5">
              <path d="M3 17c-1-4 3-5 5-3 5-3 11-2 14 2 3 5 1 11-3 14-5 3-12 2-15-3-2-4-2-7-1-10z" />
              <path d="M17 15c5-1 9 4 9 9-1 4-6 3-7 1-1-4-3-6-2-10z" fill="#888" />
              <path d="M22 12L35 2c3-2 5 0 3 4l-2 5 9-2c4-1 6 2 3 5L19 39c-4 4-10 2-8-2l4-5M5 27c-4 2-5 4-4 6 2 2 4 1 6-2" />
              <path d="M28 9l6 7 5-3M30 14l4-2" stroke="#777" />
              <path d="M9 22v.5M14 22v.5M10 25h2" />
            </g>
          </Line>
        </PhoneKey>
      </PhoneNav>
    </Page>
  );
}
